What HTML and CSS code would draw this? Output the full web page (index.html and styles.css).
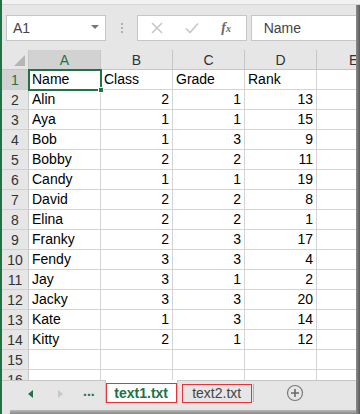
FILE: index.html
```html
<!DOCTYPE html>
<html>
<head>
<meta charset="utf-8">
<link rel="stylesheet" href="styles.css">
</head>
<body>
<div class="app">
  <div class="topstrip"></div>
  <div class="fbar">
    <div class="namebox"><span class="nb-text">A1</span><span class="nb-arrow"></span></div>
    <div class="dots"><i></i><i></i><i></i></div>
    <div class="fxbox">
      <svg class="ic-x" width="12" height="12" viewBox="0 0 12 12"><path d="M1 1L11 11M11 1L1 11" stroke="#c8c8c8" stroke-width="1.6" fill="none"/></svg>
      <svg class="ic-check" width="14" height="12" viewBox="0 0 14 12"><path d="M1 6.5L5 10.5L13 1.5" stroke="#c8c8c8" stroke-width="1.6" fill="none"/></svg>
      <span class="fx">f<sub>x</sub></span>
    </div>
    <div class="finput">Name</div>
  </div>
  <div class="sheet">
    <div class="grid">
      <div class="corner"><span class="tri"></span></div>
      <div class="ch sel">A</div><div class="ch">B</div><div class="ch">C</div><div class="ch">D</div><div class="ch ch-e"><span>E</span></div>

      <div class="rh sel">1</div><div class="c t active">Name<span class="handle"></span></div><div class="c t">Class</div><div class="c t">Grade</div><div class="c t">Rank</div><div class="c"></div>
      <div class="rh">2</div><div class="c t">Alin</div><div class="c n">2</div><div class="c n">1</div><div class="c n">13</div><div class="c"></div>
      <div class="rh">3</div><div class="c t">Aya</div><div class="c n">1</div><div class="c n">1</div><div class="c n">15</div><div class="c"></div>
      <div class="rh">4</div><div class="c t">Bob</div><div class="c n">1</div><div class="c n">3</div><div class="c n">9</div><div class="c"></div>
      <div class="rh">5</div><div class="c t">Bobby</div><div class="c n">2</div><div class="c n">2</div><div class="c n">11</div><div class="c"></div>
      <div class="rh">6</div><div class="c t">Candy</div><div class="c n">1</div><div class="c n">1</div><div class="c n">19</div><div class="c"></div>
      <div class="rh">7</div><div class="c t">David</div><div class="c n">2</div><div class="c n">2</div><div class="c n">8</div><div class="c"></div>
      <div class="rh">8</div><div class="c t">Elina</div><div class="c n">2</div><div class="c n">2</div><div class="c n">1</div><div class="c"></div>
      <div class="rh">9</div><div class="c t">Franky</div><div class="c n">2</div><div class="c n">3</div><div class="c n">17</div><div class="c"></div>
      <div class="rh">10</div><div class="c t">Fendy</div><div class="c n">3</div><div class="c n">3</div><div class="c n">4</div><div class="c"></div>
      <div class="rh">11</div><div class="c t">Jay</div><div class="c n">3</div><div class="c n">1</div><div class="c n">2</div><div class="c"></div>
      <div class="rh">12</div><div class="c t">Jacky</div><div class="c n">3</div><div class="c n">3</div><div class="c n">20</div><div class="c"></div>
      <div class="rh">13</div><div class="c t">Kate</div><div class="c n">1</div><div class="c n">3</div><div class="c n">14</div><div class="c"></div>
      <div class="rh">14</div><div class="c t">Kitty</div><div class="c n">2</div><div class="c n">1</div><div class="c n">12</div><div class="c"></div>
      <div class="rh">15</div><div class="c"></div><div class="c"></div><div class="c"></div><div class="c"></div><div class="c"></div>
      <div class="rh">16</div><div class="c"></div><div class="c"></div><div class="c"></div><div class="c"></div><div class="c"></div>
    </div>
  </div>
  <div class="tabbar">
    <span class="nav nav-left"></span>
    <span class="nav nav-right"></span>
    <span class="more">...</span>
    <div class="tab active"><span class="tab-label">text1.txt</span></div>
    <div class="tab"><span class="tab-label">text2.txt</span></div>
    <span class="tabsep"></span>
    <span class="addbtn">
      <svg width="18" height="18" viewBox="0 0 18 18"><circle cx="9" cy="9" r="7.5" fill="none" stroke="#7a7a7a" stroke-width="1.2"/><path d="M9 5V13M5 9H13" stroke="#6a6a6a" stroke-width="1.6"/></svg>
    </span>
  </div>
  <div class="bottomshadow"></div>
</div>
</body>
</html>
```

FILE: styles.css
```css
* { box-sizing: border-box; }
html, body { margin: 0; padding: 0; }
body {
  width: 360px;
  height: 414px;
  overflow: hidden;
  background: #ffffff;
  font-family: "Liberation Sans", Arial, sans-serif;
  color: #000;
}
.app {
  position: relative;
  width: 360px;
  height: 414px;
  display: flex;
  flex-direction: column;
  border-left: 2px solid #217346;
  background: #e6e6e6;
  overflow: hidden;
}
.app::after {
  content: "";
  position: absolute;
  top: 5px;
  right: 0;
  width: 4px;
  bottom: 0;
  background: linear-gradient(to right, #8c8c8c, #5a5a5a);
}
.topstrip {
  height: 5px;
  background: #f2f2f2;
  border-bottom: 1px solid #d6d6d6;
  flex: none;
}
.fbar {
  height: 45px;
  flex: none;
  display: flex;
  align-items: flex-start;
  padding-top: 10px;
  padding-left: 4px;
  background: #e6e6e6;
}
.namebox {
  width: 101px;
  height: 26px;
  background: #fff;
  border: 1px solid #c6c6c6;
  display: flex;
  align-items: center;
  justify-content: space-between;
  padding: 0 6px 0 6px;
}
.nb-text { font-size: 14px; color: #444; }
.nb-arrow {
  width: 0; height: 0;
  border-left: 4px solid transparent;
  border-right: 4px solid transparent;
  border-top: 4px solid #777;
  margin-top: -2px;
}
.dots {
  width: 31px;
  height: 26px;
  display: flex;
  flex-direction: column;
  align-items: center;
  justify-content: center;
  gap: 2px;
}
.dots i {
  display: block;
  width: 2px; height: 2px;
  background: #b0b0b0;
}
.fxbox {
  width: 110px;
  height: 26px;
  background: #fff;
  border: 1px solid #c6c6c6;
  display: flex;
  align-items: center;
  padding-left: 13px;
}
.ic-x { margin-right: 22px; }
.ic-check { margin-right: 22px; }
.fx {
  font-family: "Liberation Serif", serif;
  font-style: italic;
  font-weight: bold;
  font-size: 14px;
  color: #6a6a6a;
  line-height: 1;
}
.fx sub { font-size: 10px; vertical-align: 0; }
.finput {
  margin-left: 4px;
  width: 110px;
  height: 26px;
  background: #fff;
  border: 1px solid #c6c6c6;
  border-right: none;
  font-size: 14px;
  color: #444;
  display: flex;
  align-items: center;
  padding-left: 12px;
}
.sheet {
  height: 330px;
  flex: none;
  overflow: hidden;
  background: #fff;
}
.grid {
  display: grid;
  width: 387px;
  grid-template-columns: 27px 72px 72px 72px 72px 72px;
  grid-auto-rows: 20px;
}
.corner {
  position: relative;
  background: #e6e6e6;
  border-right: 1px solid #c6c6c6;
  border-bottom: 1px solid #c6c6c6;
}
.tri {
  position: absolute;
  right: 3px;
  bottom: 3px;
  width: 0; height: 0;
  border-left: 11px solid transparent;
  border-bottom: 11px solid #b5b5b5;
}
.ch {
  background: #e6e6e6;
  border-right: 1px solid #c6c6c6;
  border-bottom: 1px solid #c6c6c6;
  text-align: center;
  font-size: 14px;
  line-height: 20px;
  color: #333;
}
.ch.ch-e { text-align: left; padding-left: 0; }
.ch.ch-e span { display: inline-block; margin-left: 32px; }
.ch.sel { background: #d2d2d2; color: #217346; border-bottom: 1px solid #ababab; }
.rh {
  background: #e6e6e6;
  border-right: 1px solid #c6c6c6;
  border-bottom: 1px solid #d0d0d0;
  text-align: center;
  font-size: 14px;
  line-height: 20px;
  color: #333;
}
.rh.sel { background: #d2d2d2; color: #217346; }
.c {
  position: relative;
  border-right: 1px solid #d4d4d4;
  border-bottom: 1px solid #d4d4d4;
  font-size: 14px;
  line-height: 19px;
  padding: 0 3px;
  white-space: nowrap;
  color: #000;
}
.c.n { text-align: right; }
.c.active {
  outline: 2px solid #217346;
  outline-offset: -1px;
  z-index: 2;
}
.handle {
  position: absolute;
  right: -4px;
  bottom: -4px;
  width: 6px;
  height: 6px;
  background: #217346;
  border: 1px solid #fff;
}
.tabbar {
  height: 30px;
  flex: none;
  background: #e6e6e6;
  border-top: 1px solid #c6c6c6;
  display: flex;
  align-items: flex-start;
  position: relative;
}
.nav {
  width: 0; height: 0;
  border-top: 4px solid transparent;
  border-bottom: 4px solid transparent;
  margin-top: 9px;
}
.nav-left { border-right: 5px solid #217346; margin-left: 26px; }
.nav-right { border-left: 5px solid #c8c8c8; margin-left: 25px; }
.more {
  font-size: 14px;
  font-weight: bold;
  color: #217346;
  margin-left: 20px;
  line-height: 20px;
}
.tab {
  height: 22px;
  display: flex;
  align-items: center;
  justify-content: center;
  font-size: 14px;
  color: #444;
}
.tab.active {
  margin-left: 10px;
  width: 73px;
  background: #fff;
  margin-top: -1px;
  height: 23px;
  border-left: 1px solid #c6c6c6;
  border-right: 1px solid #c6c6c6;
}
.tab.active .tab-label {
  font-weight: bold;
  color: #217346;
  border: 1px solid #e8323a;
  width: 72px;
  height: 20px;
  display: flex;
  align-items: center;
  justify-content: center;
  margin-top: 2px;
}
.tab:not(.active) { margin-left: 4px; }
.tab:not(.active) .tab-label {
  border: 1px solid #e8323a;
  width: 70px;
  height: 19px;
  display: flex;
  align-items: center;
  justify-content: center;
  margin-top: 2px;
}
.tabsep {
  width: 1px;
  height: 18px;
  background: #b5b5b5;
  margin-top: 3px;
  margin-left: 1px;
}
.addbtn {
  margin-left: 32px;
  margin-top: 3px;
  display: flex;
}
.bottomshadow {
  flex: 1;
  background: linear-gradient(to bottom, #b8b8b8, #888);
  margin-left: 8px;
}
```
